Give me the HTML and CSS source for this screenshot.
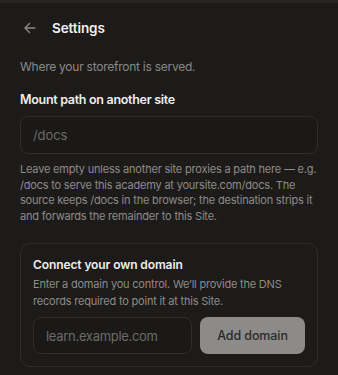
FILE: index.html
```html
<!DOCTYPE html>
<html>
<head>
<meta charset="utf-8">
<link rel="stylesheet" href="styles.css">
</head>
<body>
<div class="topbar"></div>
<div class="page">
  <header class="header">
    <svg class="back" width="16" height="16" viewBox="0 0 16 16" fill="none" stroke="#8a8886" stroke-width="1.4" stroke-linecap="round" stroke-linejoin="round"><path d="M13 8H3M7.5 3.5L3 8l4.5 4.5"/></svg>
    <h1 class="title">Settings</h1>
  </header>
  <p class="subtitle">Where your storefront is served.</p>
  <label class="label">Mount path on another site</label>
  <div class="input big"><span class="ph">/docs</span></div>
  <p class="help">Leave empty unless another site proxies a path here — e.g. /docs to serve this academy at yoursite.com/docs. The source keeps /docs in the browser; the destination strips it and forwards the remainder to this Site.</p>
  <section class="card">
    <h2 class="card-title">Connect your own domain</h2>
    <p class="card-desc">Enter a domain you control. We’ll provide the DNS records required to point it at this Site.</p>
    <div class="row">
      <div class="input small"><span class="ph small-ph">learn.example.com</span></div>
      <button class="btn">Add domain</button>
    </div>
  </section>
</div>
</body>
</html>
```
FILE: styles.css
```css
* { box-sizing: border-box; }
html, body { margin: 0; padding: 0; }
body {
  background: #1c1b1a;
  font-family: Inter, "Noto Sans", sans-serif;
  color: #ededec;
  width: 338px;
  height: 375px;
  overflow: hidden;
}
.topbar { height: 3px; background: #272625; }
.page { padding: 0 20px; }
.header {
  height: 50px;
  display: flex;
  align-items: center;
  padding-left: 2px;
}
.back { flex: none; }
.title {
  margin: 0 0 0 14px;
  font-size: 13.5px;
  font-weight: 600;
  letter-spacing: -0.1px;
  color: #f1f0ef;
}
.subtitle {
  margin: 5px 0 0;
  font-size: 12px;
  line-height: 18px;
  letter-spacing: -0.25px;
  color: #8b8987;
}
.label {
  display: block;
  margin-top: 15px;
  font-size: 12.5px;
  line-height: 18px;
  font-weight: 600;
  letter-spacing: -0.3px;
  color: #efeeed;
}
.input {
  border: 1px solid #2f2e2c;
  border-radius: 8px;
  display: flex;
  align-items: center;
  background: #1a1918;
}
.input.big {
  margin-top: 7px;
  height: 38px;
  padding-left: 12px;
}
.ph { color: #6d6b68; font-size: 13px; letter-spacing: -0.1px; }
.small-ph { letter-spacing: -0.3px; }
.help {
  margin: 8px 0 0;
  font-size: 11px;
  line-height: 15.5px;
  letter-spacing: -0.2px;
  color: #8e8b88;
}
.card {
  margin-top: 19px;
  border: 1px solid #2e2d2b;
  border-radius: 10px;
  padding: 12px 12px 12px;
}
.card-title {
  margin: 0;
  font-size: 12px;
  line-height: 18px;
  font-weight: 600;
  letter-spacing: -0.1px;
  color: #efeeed;
}
.card-desc {
  margin: 2px 0 0;
  font-size: 11px;
  line-height: 17px;
  letter-spacing: -0.2px;
  color: #8e8b88;
}
.row {
  margin-top: 7px;
  display: flex;
  gap: 8px;
}
.input.small {
  flex: 1;
  height: 37px;
  padding-left: 12px;
}
.btn {
  flex: none;
  width: 105px;
  height: 37px;
  border: none;
  border-radius: 8px;
  background: #8d8b89;
  color: #2a2928;
  font-family: Inter, "Noto Sans", sans-serif;
  font-size: 12.5px;
  font-weight: 500;
  letter-spacing: -0.1px;
}
```
